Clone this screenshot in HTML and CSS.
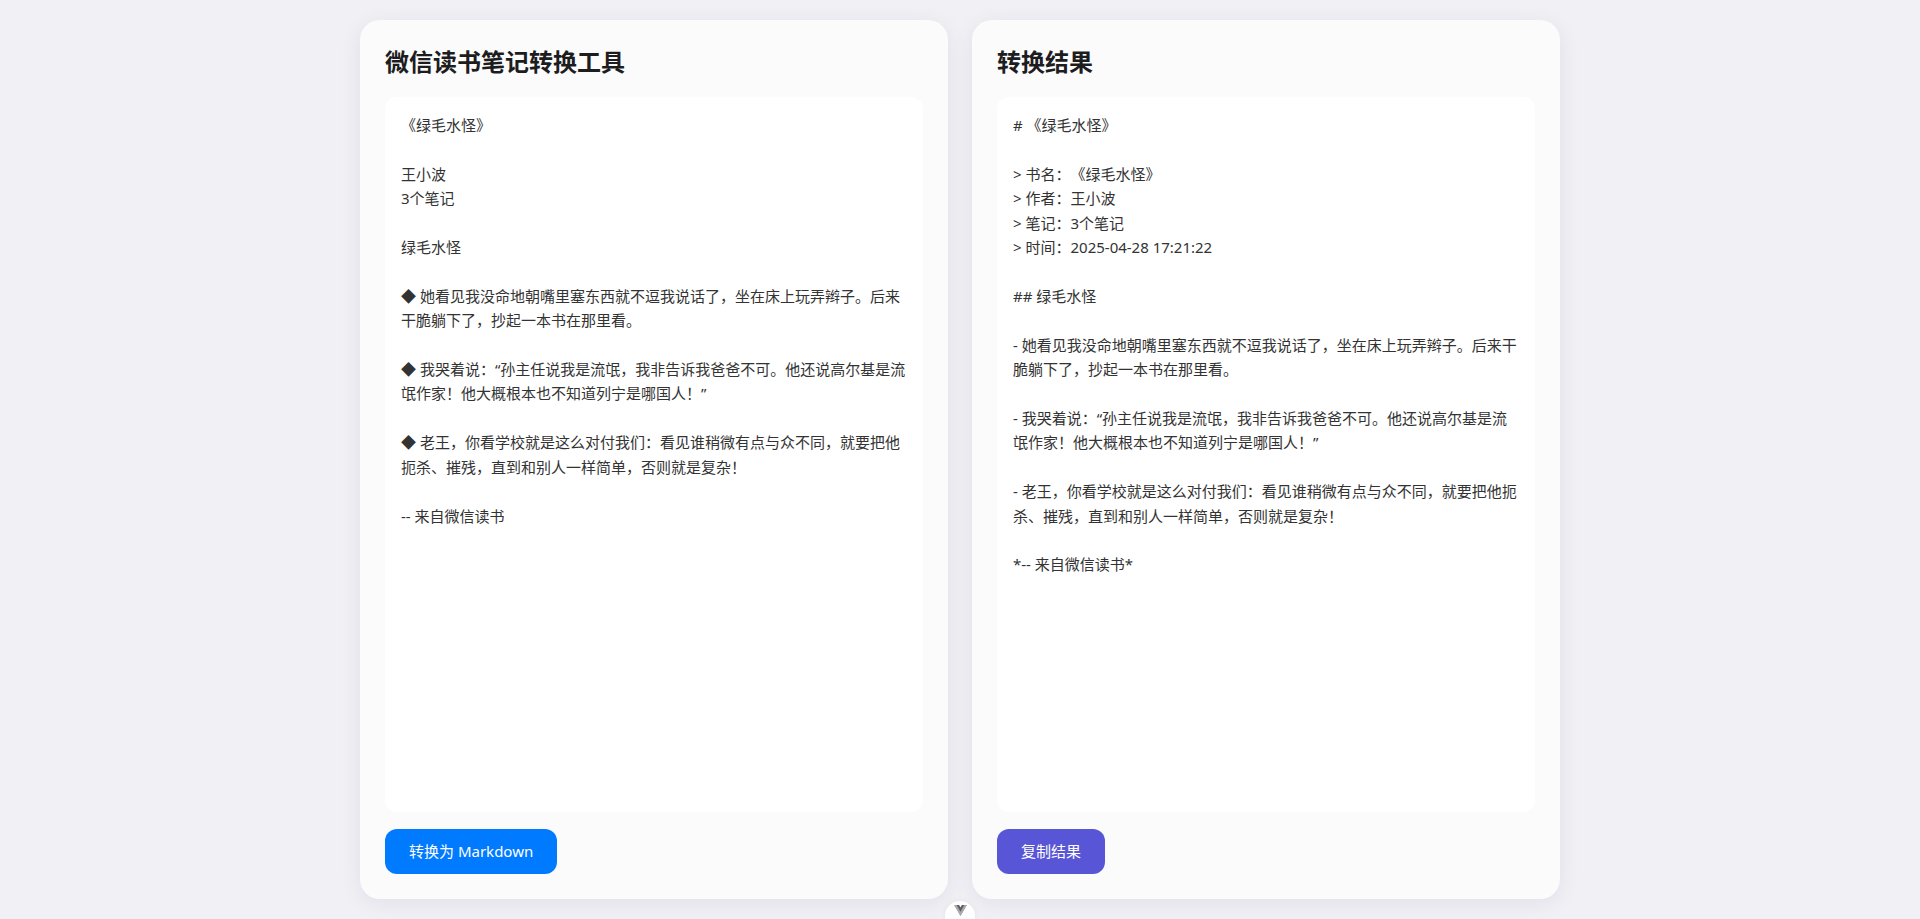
FILE: index.html
```html
<!DOCTYPE html>
<html lang="zh-CN">
<head>
<meta charset="utf-8">
<title>微信读书笔记转换工具</title>
<link rel="stylesheet" href="styles.css">
</head>
<body>
<main class="app">
  <section class="panel">
    <h1 class="panel-title">微信读书笔记转换工具</h1>
    <textarea class="editor" spellcheck="false">《绿毛水怪》

王小波
3个笔记

绿毛水怪

◆ 她看见我没命地朝嘴里塞东西就不逗我说话了，坐在床上玩弄辫子。后来干脆躺下了，抄起一本书在那里看。

◆ 我哭着说：“孙主任说我是流氓，我非告诉我爸爸不可。他还说高尔基是流氓作家！他大概根本也不知道列宁是哪国人！”

◆ 老王，你看学校就是这么对付我们：看见谁稍微有点与众不同，就要把他扼杀、摧残，直到和别人一样简单，否则就是复杂！

-- 来自微信读书</textarea>
    <button class="btn btn-primary" type="button">转换为 Markdown</button>
  </section>
  <section class="panel">
    <h1 class="panel-title">转换结果</h1>
    <div class="editor result"># 《绿毛水怪》

&gt; 书名：《绿毛水怪》
&gt; 作者：王小波
&gt; 笔记：3个笔记
&gt; 时间：2025-04-28 17:21:22

## 绿毛水怪

- 她看见我没命地朝嘴里塞东西就不逗我说话了，坐在床上玩弄辫子。后来干脆躺下了，抄起一本书在那里看。

- 我哭着说：“孙主任说我是流氓，我非告诉我爸爸不可。他还说高尔基是流氓作家！他大概根本也不知道列宁是哪国人！”

- 老王，你看学校就是这么对付我们：看见谁稍微有点与众不同，就要把他扼杀、摧残，直到和别人一样简单，否则就是复杂！

*-- 来自微信读书*</div>
    <button class="btn btn-secondary" type="button">复制结果</button>
  </section>
</main>
<div class="devtools-toggle" aria-hidden="true">
  <svg class="vue-logo" viewBox="0 0 256 221" width="13" height="11">
    <path fill="#a8a8ad" d="M204.8 0H256L128 220.8 0 0h97.92L128 51.2 157.44 0h47.36Z"/>
    <path fill="#a8a8ad" d="M0 0l128 220.8L256 0h-51.2L128 132.48 50.56 0H0Z"/>
    <path fill="#5f5f66" d="M50.56 0L128 133.12 204.8 0h-47.36L128 51.2 97.92 0H50.56Z"/>
  </svg>
</div>
</body>
</html>
```

FILE: styles.css
```css
* {
  box-sizing: border-box;
}

html,
body {
  height: 100%;
}

body {
  margin: 0;
  background: #f0f0f5;
  color: #1d1d1f;
  font-family: "Noto Sans", "Noto Sans CJK SC", sans-serif;
  text-spacing-trim: space-all;
  overflow: hidden;
}

.app {
  display: flex;
  gap: 24px;
  max-width: 1200px;
  height: 100vh;
  margin: 0 auto;
  padding: 20px 0;
}

.panel {
  flex: 1;
  min-width: 0;
  display: flex;
  flex-direction: column;
  padding: 25px;
  background: #fbfbfc;
  border-radius: 20px;
  box-shadow: 0 4px 22px rgba(30, 30, 60, 0.07);
}

.panel-title {
  margin: 0 0 18px;
  font-size: 24px;
  line-height: 34px;
  font-weight: 700;
  color: #1d1d1f;
}

.editor {
  flex: 1;
  min-height: 0;
  width: 100%;
  margin: 0 0 17px;
  padding: 16px;
  border: none;
  border-radius: 12px;
  background: #ffffff;
  color: #333333;
  font-family: "Noto Sans", "Noto Sans CJK SC", sans-serif;
  font-size: 15px;
  line-height: 24.4px;
  text-spacing-trim: space-all;
  resize: none;
  outline: none;
  overflow: auto;
}

.result {
  white-space: pre-wrap;
  word-break: break-word;
}

.btn {
  align-self: flex-start;
  padding: 12px 24px;
  border: none;
  border-radius: 12px;
  color: #ffffff;
  font-family: "Noto Sans", "Noto Sans CJK SC", sans-serif;
  font-size: 15px;
  line-height: 21px;
  cursor: pointer;
}

.btn-primary {
  background: #007aff;
}

.btn-secondary {
  background: #5856d6;
}

.devtools-toggle {
  position: fixed;
  left: 50%;
  bottom: -14px;
  width: 30px;
  height: 32px;
  margin-left: -15px;
  display: flex;
  justify-content: center;
  padding-top: 4px;
  background: #ffffff;
  border-radius: 15px;
  box-shadow: 0 0 6px rgba(0, 0, 0, 0.06);
}

.vue-logo {
  display: block;
}
```
